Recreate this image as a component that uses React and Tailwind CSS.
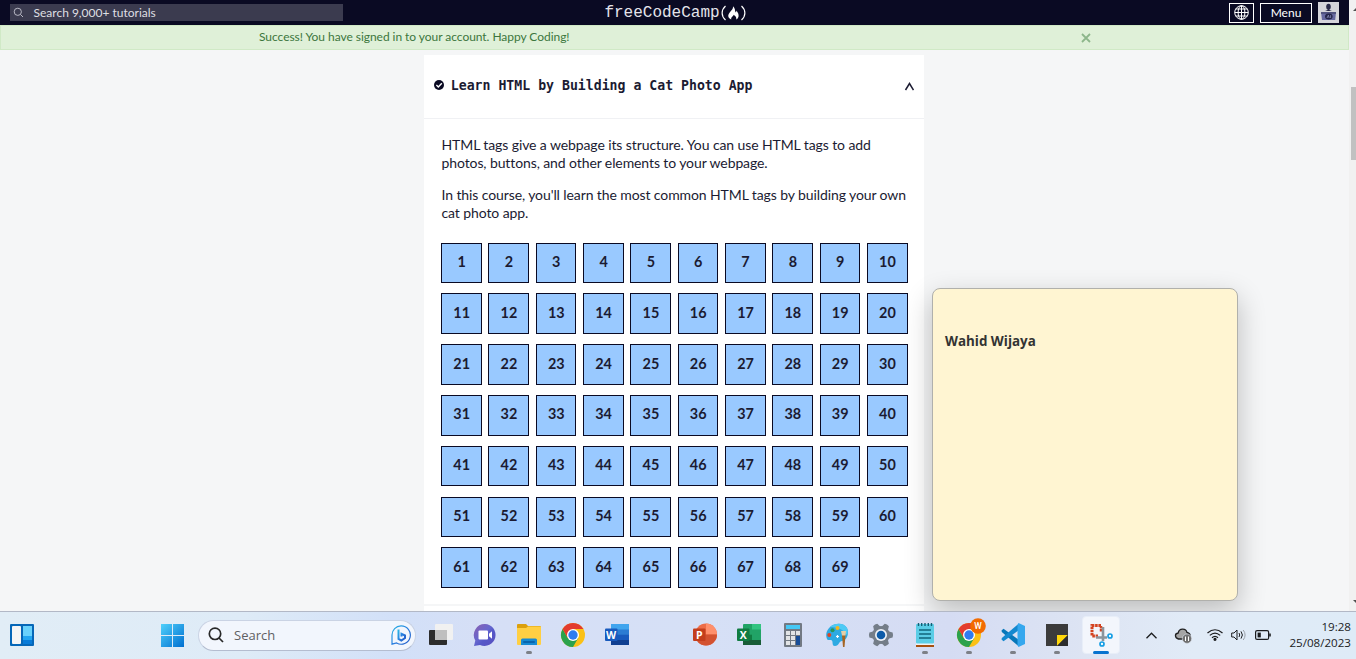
import React from "react";

const steps = Array.from({ length: 69 }, (_, i) => i + 1);

function Navbar() {
  return (
    <header className="grid h-[25px] grid-cols-[1fr_auto_1fr] items-center bg-[#0a0a23] text-white">
      <div className="ml-2.5 flex h-[17px] w-[333px] items-center bg-[#3b3b4f]">
        <svg className="ml-[3px] h-[11px] w-[11px]" viewBox="0 0 11 11" fill="none" stroke="#b8b8c4" strokeWidth="1">
          <circle cx="4.8" cy="4.8" r="3.6" />
          <path d="M7.5 7.5 L10 10" />
        </svg>
        <span className="ml-[9.5px] text-[12px] leading-[17px] text-[#dfdfe2]">Search 9,000+ tutorials</span>
      </div>
      <div className="flex items-center">
        <span className="ml-[1px] font-['Liberation_Mono',monospace] text-[16px] leading-[24px] text-[#e4e4ea]">freeCodeCamp</span>
        <svg className="h-[18px] w-[26px]" viewBox="0 0 26 18" fill="none" stroke="white" strokeWidth="1.2">
          <path d="M5.5 2 C1 6 1 12 5.5 16 M21.5 2 C26 6 26 12 21.5 16" />
          <path fill="white" stroke="none" d="M13 2.2 C15.2 3.8 14.9 6.8 15.5 8.2 C16.5 8.4 16.3 7 16.2 6.4 C18.8 8.8 20 13.4 16.3 15.4 C16.6 13.6 15.6 11.8 13.5 10.8 C13.4 12.8 10.9 12.6 11.2 15.4 C7.6 13.8 7.6 10.8 9.7 8.4 C11.6 6 13.4 4.8 13 2.2 Z" />
        </svg>
      </div>
      <div className="flex items-center justify-end pr-[10px]">
        <div className="flex h-5 w-[25px] items-center justify-center border border-white">
          <svg className="h-[15px] w-[15px]" viewBox="0 0 15 15" fill="none" stroke="white" strokeWidth="1">
            <circle cx="7.5" cy="7.5" r="6.8" />
            <ellipse cx="7.5" cy="7.5" rx="3.4" ry="6.8" />
            <path d="M7.5 .7 V14.3 M.7 7.5 H14.3 M1.7 4 H13.3 M1.7 11 H13.3" />
          </svg>
        </div>
        <div className="ml-1.5 flex h-5 w-[52px] items-center justify-center border border-white text-[12px] leading-[18px]">Menu</div>
        <svg className="ml-1.5 h-[21px] w-[21px] bg-[#d4d4da]" viewBox="0 0 21 21">
          <ellipse cx="10.5" cy="4.8" rx="2.3" ry="3" fill="#292a49" />
          <path d="M9.7 7 H11.3 V8 L14 9 H7 L9.7 8 Z" fill="#292a49" />
          <path d="M3 10 H18 L17.2 18 H4 Z" fill="#6668a0" />
          <path d="M3 10 H18 V12 H3 Z" fill="#50527f" />
          <ellipse cx="10.8" cy="14.6" rx="3.8" ry="3" fill="#24254a" />
          <path d="M9 16 L10.4 13.2 L11.2 16 M12.6 13.2 V16" stroke="#9a9cc8" strokeWidth=".7" fill="none" />
        </svg>
      </div>
    </header>
  );
}

function Alert() {
  return (
    <div className="flex h-[25px] items-center border border-[#d0e9c6] bg-[#dff0d8] text-[#3c763d]">
      <span className="ml-[258px] mt-[-1px] w-[821.5px] text-[12px] leading-[22px] tracking-[-0.045px]">Success! You have signed in to your account. Happy Coding!</span>
      <svg className="h-[10px] w-[10px]" viewBox="0 0 10 10" stroke="#8db68b" strokeWidth="1.8">
        <path d="M1 1 L9 9 M9 1 L1 9" />
      </svg>
    </div>
  );
}

function Course() {
  return (
    <main className="ml-[424px] mt-[5px] h-[556px] w-[500px] bg-white text-[#1b1b32]">
      <div className="flex h-16 items-center border-b border-[#f0f1f4] px-2.5">
        <svg className="mt-[-3px] h-[10px] w-[10px]" viewBox="0 0 10 10">
          <circle cx="5" cy="5" r="5" fill="#0a0a23" />
          <path d="M2.4 5.1 L4.3 6.9 L7.8 3.2" fill="none" stroke="white" strokeWidth="1.4" />
        </svg>
        <h3 className="ml-[6.8px] mt-[-2px] flex-1 whitespace-nowrap font-['DejaVu_Sans_Mono',monospace] text-[13.2px] font-bold">Learn HTML by Building a Cat Photo App</h3>
        <svg className="mt-[-1px] h-[9px] w-[10px]" viewBox="0 0 10 9" fill="none" stroke="#1b1b32" strokeWidth="1.5">
          <path d="M1.5 8 L5.5 1.5 L9.5 8" />
        </svg>
      </div>
      <div className="whitespace-nowrap pl-[17.5px] pt-[17px] text-[14px] leading-[18px] tracking-[-0.1px]">
        <p>HTML tags give a webpage its structure. You can use HTML tags to add<br />photos, buttons, and other elements to your webpage.</p>
        <p className="mt-[14px]">In this course, you'll learn the most common HTML tags by building your own<br />cat photo app.</p>
      </div>
      <div className="ml-[17px] mt-[20.6px] grid grid-cols-[repeat(10,40.8px)] gap-x-[6.53px] gap-y-[10.1px]">
        {steps.map((n) => (
          <div key={n} className="flex h-[40.7px] items-center justify-center border border-[#0a0a23] bg-[#99c9ff] pb-[2px] pl-[0.5px] text-[14.4px] font-bold">{n}</div>
        ))}
      </div>
      <div className="mt-4 h-[2px] bg-[#f5f6f7]" />
    </main>
  );
}

function Scrollbar() {
  return (
    <div className="flex w-[7px] flex-col items-end bg-[#f1f1f1]">
      <svg className="mt-[8px] h-[4px] w-[3px]" viewBox="0 0 3 4"><path d="M0 3 L3 0 V3 Z" fill="#505050" /></svg>
      <div className="mt-[75px] h-[73px] w-[5px] bg-[#c1c1c1]" />
      <svg className="mt-[439px] h-[4px] w-[3px]" viewBox="0 0 3 4"><path d="M0 1 L3 4 V1 Z" fill="#505050" /></svg>
    </div>
  );
}

function Slot({ children, dot }) {
  return (
    <div className="relative flex h-full w-[44px] shrink-0 items-center justify-center pb-[1px]">
      {children}
      {dot && <span className="absolute bottom-[5px] h-[3px] w-[6px] rounded-full bg-[#7d8087]" />}
    </div>
  );
}

function Icon({ children }) {
  return <svg className="h-6 w-6 overflow-visible" viewBox="0 0 24 24">{children}</svg>;
}

function Chrome() {
  return (
    <>
      <circle cx="12" cy="12" r="12" fill="#fbc116" />
      <path d="M1.6 6 A12 12 0 0 0 12 24 L17.2 15 H6.8 Z" fill="#2ba24c" />
      <path d="M1.6 6 A12 12 0 0 1 22.4 6 H12 L6.8 15 Z" fill="#e33b2e" />
      <circle cx="12" cy="12" r="6" fill="white" />
      <circle cx="12" cy="12" r="4.7" fill="#2f7cf0" />
    </>
  );
}

function OfficeLetter({ letter, color }) {
  return (
    <>
      <rect x="0" y="5.5" width="12.5" height="12.5" rx="1" fill={color} />
      <text x="6.2" y="15.6" textAnchor="middle" fill="white" fontSize="10.5" fontWeight="700" fontFamily="Open Sans, sans-serif">{letter}</text>
    </>
  );
}

function TaskIcons() {
  return (
    <div className="ml-[3px] flex h-full">
      <Slot><Icon>
        <rect x="0" y="7" width="18" height="15" rx="1" fill="#2c2c2c" />
        <rect x="6" y="1" width="18" height="16" rx="1" fill="#f1f1f1" />
        <path d="M6 7 H18 V17 H6 Z" fill="#bfbfbf" />
      </Icon></Slot>
      <Slot><Icon>
        <defs><linearGradient id="chat" x1="0" y1="0" x2="1" y2="1"><stop stopColor="#8b5fb0" /><stop offset=".45" stopColor="#6667ce" /><stop offset=".6" stopColor="#5558c8" /><stop offset="1" stopColor="#5a4fc0" /></linearGradient></defs>
        <path d="M12 1 A11 11 0 1 1 7 22 L1 23 L2.3 17.5 A11 11 0 0 1 12 1 Z" fill="url(#chat)" />
        <rect x="5.5" y="7.5" width="9.5" height="9" rx="1" fill="white" />
        <path d="M16 10.7 L19 8.3 V15.7 L16 13.3 Z" fill="white" />
      </Icon></Slot>
      <Slot dot><Icon>
        <path d="M0 2 Q0 1 1 1 H9 L11 3 H23 Q24 3 24 4 V8 H0 Z" fill="#dca00d" />
        <path d="M0 5 H9 L11 3.5 H24 V21 Q24 22 23 22 H1 Q0 22 0 21 Z" fill="#ffcf43" />
        <path d="M4 22 V17 Q4 15.5 5.5 15.5 H18.5 Q20 15.5 20 17 V22 Z" fill="#1689d2" />
        <path d="M7 19 H17" stroke="#0964ad" strokeWidth="2" strokeLinecap="round" />
      </Icon></Slot>
      <Slot><Icon><Chrome /></Icon></Slot>
      <Slot><Icon>
        <rect x="6" y="1" width="18" height="21" rx="1" fill="#2b7cd3" />
        <path d="M6 1 H24 V6.5 H6 Z" fill="#41a5ee" />
        <path d="M6 11.7 H24 V17 H6 Z" fill="#185abd" />
        <path d="M6 17 H24 V22 H6 Z" fill="#103f91" />
        <OfficeLetter letter="W" color="#185abd" />
      </Icon></Slot>
      <Slot />
      <Slot><Icon>
        <circle cx="13" cy="11.5" r="11" fill="#ed6c47" />
        <path d="M13 .5 A11 11 0 0 1 24 11.5 H13 Z" fill="#ff8f6b" />
        <path d="M24 11.5 A11 11 0 0 1 2 11.5 Z" fill="#d35230" />
        <OfficeLetter letter="P" color="#c43e1c" />
      </Icon></Slot>
      <Slot><Icon>
        <rect x="6" y="1" width="18" height="21" rx="1" fill="#21a366" />
        <path d="M15 1 H24 V6.5 H15 Z" fill="#33c481" />
        <path d="M6 11.7 H15 V17 H6 Z" fill="#107c41" />
        <path d="M6 17 H24 V22 H6 Z" fill="#185c37" />
        <OfficeLetter letter="X" color="#107c41" />
      </Icon></Slot>
      <Slot><Icon>
        <rect x="3" y="0" width="18" height="24" rx="1" fill="#727983" />
        <rect x="5" y="2" width="14" height="4" fill="#45c8f5" />
        <path d="M5 8 H9 V12 H5 Z M10 8 H14 V12 H10 Z M15 8 H19 V12 H15 Z M5 13 H9 V17 H5 Z M10 13 H14 V17 H10 Z M5 18 H9 V22 H5 Z M10 18 H14 V22 H10 Z" fill="#e2e4e6" />
        <rect x="15" y="13" width="4" height="9" fill="#174d98" />
      </Icon></Slot>
      <Slot><Icon>
        <path d="M2 16 C.5 12 1 8 5 4 C10-.5 19-.5 22 5 C25 11 21 18 17 18 C14 18 14 23 10 23 C6 23 9 18 6 17 C4 16.5 3 18 2 16 Z" fill="#2eaae2" />
        <path d="M5 4 C10-.5 19-.5 22 5 C23 7 23 10 22 12 C18 6 12 4 5 4 Z" fill="#4ecaf5" />
        <circle cx="7.5" cy="7.2" r="2" fill="#29965b" /><circle cx="12.5" cy="5" r="2" fill="#f4b51d" /><circle cx="4.3" cy="12" r="2" fill="#dc4525" />
        <path d="M11 13.5 H14 M12.5 12 V15" stroke="white" strokeWidth="1.2" />
        <path d="M17 12 H20.5 L19.5 24 H18 Z" fill="#a56523" />
        <path d="M16 8 H21 L20.5 12.5 H17 Z" fill="#e5cfa7" />
      </Icon></Slot>
      <Slot><Icon>
        <g fill="#747d88"><circle cx="12" cy="12" r="9" />
          {[0, 60, 120, 180, 240, 300].map((a) => <path key={a} transform={`rotate(${a + 30} 12 12)`} d="M9.6 0.4 Q12-.5 14.4 .4 L15.8 5 H8.2 Z" />)}
        </g>
        <circle cx="12" cy="12" r="6" fill="#eef1f6" /><circle cx="12" cy="12" r="4.3" fill="#0d5ba8" />
      </Icon></Slot>
      <Slot dot><Icon>
        <path d="M3 21 H21 V24 H3 Z" fill="#a8500f" /><path d="M3 20 H21 V22 H3 Z" fill="#eef2f4" />
        <rect x="3" y="1" width="18" height="19.5" rx="1" fill="#5bcde6" />
        <path d="M6 7 H18 M6 11 H18 M6 15 H18" stroke="#12667c" strokeWidth="1.3" />
        <path d="M5.5 0 V3 M8.7 0 V3 M12 0 V3 M15.3 0 V3 M18.5 0 V3" stroke="#155f75" strokeWidth="1.4" />
      </Icon></Slot>
      <Slot dot><Icon>
        <Chrome />
        <circle cx="21" cy="3" r="7.8" fill="#f26b00" />
        <text x="21" y="6" textAnchor="middle" fontSize="8.5" fontFamily="Roboto, sans-serif" fill="white" fontWeight="500">W</text>
      </Icon></Slot>
      <Slot dot><Icon>
        <path d="M0.5 7.5 L2.5 5.8 L18 17 V23.5 L.8 9 Z" fill="#0877b9" />
        <path d="M0.5 16.5 L2.5 18.2 L18 7 V.5 L.8 15 Z" fill="#1488cf" />
        <path d="M17.5 0 L24 3 V21 L17.5 24 L16.5 22 V2 Z" fill="#35a7ee" />
      </Icon></Slot>
      <Slot dot><Icon>
        <rect x="1" y="1" width="22" height="22" fill="#3b3b3b" />
        <path d="M12 12 H23 L12 23 Z" fill="#ffd70a" /><path d="M23 12 V23 H12 Z" fill="#2d2d2d" />
      </Icon></Slot>
      <div className="relative flex w-[44px] items-center justify-center">
        <div className="mt-[-1px] flex h-[38px] w-[38px] shrink-0 items-center justify-center rounded-[4px] border border-[#e8eef8] bg-[#f3f6fc]">
          <svg className="h-6 w-6 overflow-visible" viewBox="0 0 24 24">
            <path d="M12 2.5 H3 V13 H9" fill="none" stroke="#d44320" strokeWidth="3" strokeDasharray="2.6 .7" />
            <path d="M12 3 V9" fill="none" stroke="#d44320" strokeWidth="2.5" strokeDasharray="2.4 .7" />
            <path d="M14 4 V18 M7 14.5 H18" stroke="#8c949c" strokeWidth="2.6" />
            <circle cx="21" cy="13" r="2" fill="white" stroke="#159ee4" strokeWidth="1.7" />
            <circle cx="13" cy="21" r="2" fill="white" stroke="#159ee4" strokeWidth="1.7" />
          </svg>
        </div>
        <span className="absolute bottom-[5px] h-[3px] w-4 rounded-full bg-[#0873cf]" />
      </div>
    </div>
  );
}

function Taskbar() {
  return (
    <footer className="flex h-[48px] items-center border-t border-[#b2b8c6] bg-[linear-gradient(90deg,#e1edf6_0%,#deebf7_18%,#d2e0f8_29%,#d6dff6_36%,#d6e0f6_52%,#d5dcf3_70%,#dde4f3_80%,#e1ebf7_88%,#deebf7_100%)] font-['Open_Sans',sans-serif]">
      <svg className="ml-[10px] mt-[-1px] h-[22px] w-6" viewBox="0 0 24 22">
        <rect width="24" height="22" rx="1" fill="#0667b8" />
        <rect x="2" y="2" width="9" height="18" rx="1" fill="#f5f5f5" />
        <path d="M13 2 H22 V12 H13 Z" fill="#69d2fc" /><path d="M13 12 H22 V16 H13 Z" fill="#22a6f2" /><path d="M13 16 H22 V20 H13 Z" fill="#087bd8" />
      </svg>
      <svg className="ml-[127px] h-[23px] w-[23px]" viewBox="0 0 23 23">
        <defs><linearGradient id="win" x1="0" y1="0" x2="1" y2="1"><stop stopColor="#4fd0fb" /><stop offset="1" stopColor="#006fd0" /></linearGradient></defs>
        <path fill="url(#win)" d="M0 0 H11 V11 H0 Z M12 0 H23 V11 H12 Z M0 12 H11 V23 H0 Z M12 12 H23 V23 H12 Z" />
      </svg>
      <div className="ml-[13.5px] mt-[-1px] flex h-[31px] w-[218px] items-center rounded-full border border-[#cad3e4] border-b-[#b4bdd0] bg-[#f2f6fd] pl-[9.5px] pr-[4px]">
        <svg className="h-4 w-4" viewBox="0 0 16 16" fill="none" stroke="#292929" strokeWidth="1.7"><circle cx="7" cy="6.8" r="5.7" /><path d="M11 11 L15 15" /></svg>
        <span className="ml-[10px] flex-1 text-[13px] leading-[18px] text-[#5f6063]">Search</span>
        <svg className="h-5 w-5" viewBox="0 0 20 20" fill="none">
          <defs><linearGradient id="bing" x1="0" y1="0" x2="1" y2="1"><stop stopColor="#29b6e5" /><stop offset=".5" stopColor="#287fe0" /><stop offset="1" stopColor="#2359c5" /></linearGradient></defs>
          <path d="M10 .8 A9.2 9.2 0 1 1 5.6 18 L1 19.2 V10 A9.2 9.2 0 0 1 10 .8 Z" stroke="url(#bing)" strokeWidth="1.2" />
          <path d="M7.5 4.5 V14 L10.3 15.5 L14 13 V10.5 L10.5 8.8 V11.5" stroke="url(#bing)" strokeWidth="2" />
        </svg>
      </div>
      <TaskIcons />
      <div className="ml-[23.5px] mt-[-1px] flex items-center text-[#1b1c1e]">
        <svg className="h-[7px] w-[11px]" viewBox="0 0 11 7" fill="none" stroke="#1b1c1e" strokeWidth="1.3"><path d="M.5 6.2 L5.5 1.2 L10.5 6.2" /></svg>
        <svg className="ml-[18px] h-[15px] w-4 overflow-visible" viewBox="0 0 16 15">
          <path d="M3.5 11 C-.5 10-.5 5.5 3.2 5 C4 0 11 0 12 4.5 C16 5 16 10 13 11 Z" fill="#a5a5a5" stroke="#202020" strokeWidth="1.3" />
          <circle cx="12" cy="10.7" r="4.7" fill="#707070" stroke="#e0e8f4" strokeWidth=".6" /><path d="M10.5 8.5 V13 M13.5 8.5 V13" stroke="white" strokeWidth="1" />
        </svg>
        <svg className="ml-[16px] h-3 w-4" viewBox="0 0 16 12" fill="none" stroke="#1b1c1e" strokeWidth="1.2">
          <path d="M.5 4 Q8-2.5 15.5 4 M2.8 6.4 Q8 1.7 13.2 6.4 M5 8.8 Q8 6 11 8.8" /><circle cx="8" cy="10.3" r="1" fill="#1b1c1e" />
        </svg>
        <svg className="ml-2 h-3 w-4" viewBox="0 0 16 12" fill="none" stroke="#1b1c1e" strokeWidth="1">
          <path d="M.7 4 H3 L6 1 V11 L3 8 H.7 Z M8 4 Q9.5 6 8 8 M10 2.4 Q12.8 6 10 9.6" /><path d="M12.2 1 Q16 6 12.2 11" stroke="#9aa0a8" />
        </svg>
        <svg className="ml-[8px] h-[10px] w-4" viewBox="0 0 16 10" fill="none" stroke="#1b1c1e" strokeWidth="1.2">
          <rect x=".6" y=".6" width="13" height="8.8" rx="1.5" /><rect x="2.6" y="2.6" width="3.2" height="4.8" fill="#1b1c1e" stroke="none" /><path d="M15 3.4 V6.6" strokeWidth="1.6" />
        </svg>
      </div>
      <div className="mt-[-2px] flex-1 whitespace-nowrap pr-[5px] text-right text-[11.6px] leading-[16px] text-[#1b1c1e]">
        <div>19:28</div>
        <div>25/08/2023</div>
      </div>
    </footer>
  );
}

export default function App() {
  return (
    <div className="relative flex h-[659px] w-[1356px] flex-col overflow-hidden bg-[#f5f6f7] font-[Lato,sans-serif]">
      <div className="relative flex h-[611px] overflow-hidden">
        <div className="w-[1349px]">
          <Navbar />
          <Alert />
          <Course />
        </div>
        <Scrollbar />
        <aside className="absolute left-[932px] top-[288px] h-[313px] w-[306px] rounded-[8px] border border-[#b0b0ac] bg-[#fff5d2] px-3 pt-[43px] font-['Open_Sans',sans-serif] text-[13.4px] font-bold leading-[19px] text-[#333333] shadow-[0_10px_28px_rgba(0,0,0,0.24)]">
          Wahid Wijaya
        </aside>
      </div>
      <Taskbar />
    </div>
  );
}
